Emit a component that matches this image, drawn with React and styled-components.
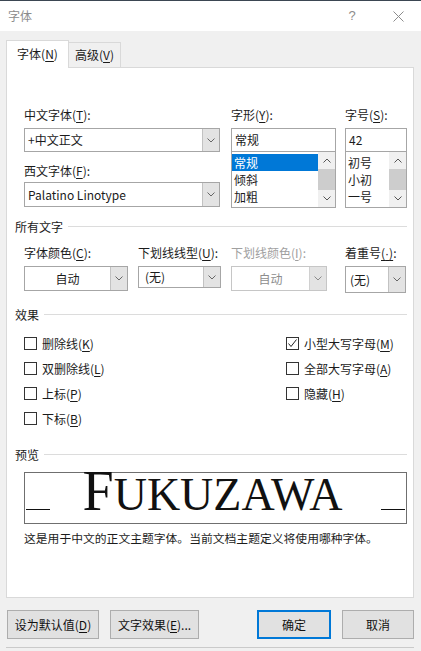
import React from 'react'
import styled, {createGlobalStyle} from 'styled-components'

const GlobalStyle = createGlobalStyle`
  html, body {
    margin: 0;
    padding: 0;
    background: #f0f0f0;
  }
  body {
    font-family: "Noto Sans CJK SC", "Microsoft YaHei", sans-serif;
    font-size: 12px;
    color: #1b1b1b;
  }
  * {
    box-sizing: border-box;
  }
  u {
    text-underline-offset: 2px;
  }
`

const Window = styled.div`
  width: 421px;
  height: 651px;
  display: flex;
  flex-direction: column;
  border-top: 1px solid #3b4652;
  background: #f0f0f0;
  overflow: hidden;
`

const TitleBar = styled.div`
  height: 30px;
  flex-shrink: 0;
  background: #fff;
  display: flex;
  align-items: center;
  padding-left: 8px;
  color: #8c8c8c;
  line-height: 16px;
`

const TitleText = styled.div`
  flex: 1;
`

const TitleButton = styled.div`
  width: 46px;
  height: 30px;
  display: flex;
  align-items: center;
  justify-content: center;
  color: #8c8c8c;
  font-family: "Liberation Sans", sans-serif;
  font-size: 13px;
`

const Body = styled.div`
  flex: 1;
  display: flex;
  flex-direction: column;
  padding: 9px 7px 0 6px;
`

const TabRow = styled.div`
  height: 27px;
  display: flex;
  align-items: flex-end;
`

const Tab = styled.div`
  position: relative;
  z-index: ${(p) => (p.$active ? 1 : 0)};
  width: ${(p) => p.$w}px;
  height: ${(p) => (p.$active ? 28 : 25)}px;
  margin-bottom: ${(p) => (p.$active ? -1 : 0)}px;
  background: ${(p) => (p.$active ? '#fff' : '#f0f0f0')};
  border: 1px solid #d9d9d9;
  border-bottom: none;
  border-left: ${(p) => (p.$first ? '1px solid #d9d9d9' : 'none')};
  display: flex;
  align-items: center;
  justify-content: center;
  line-height: 16px;
  padding-bottom: ${(p) => (p.$active ? 1 : 0)}px;
`

const Panel = styled.div`
  height: 531px;
  background: #fff;
  border: 1px solid #d9d9d9;
  padding: 39px 6px 0 8px;
  display: flex;
  flex-direction: column;
`

const Indent = styled.div`
  margin-left: 9px;
  display: grid;
  grid-template-columns: ${(p) => p.$cols};
  align-items: start;
`

const Column = styled.div`
  display: flex;
  flex-direction: column;
`

const Label = styled.div`
  line-height: 16px;
  height: 16px;
  white-space: nowrap;
  color: ${(p) => (p.$disabled ? '#a0a0a0' : '#1b1b1b')};
  margin-top: ${(p) => p.$mt || 0}px;
  margin-bottom: ${(p) => p.$mb || 0}px;
`

const Dot = styled.span`
  font-family: "Liberation Sans", sans-serif;
`

const Combo = styled.div`
  width: ${(p) => p.$w}px;
  height: ${(p) => p.$h}px;
  border: 1px solid ${(p) => (p.$disabled ? '#c6c6c6' : '#a6a6a6')};
  background: #fff;
  display: flex;
  align-items: stretch;
`

const ComboValue = styled.div`
  flex: 1;
  display: flex;
  align-items: center;
  justify-content: ${(p) => (p.$center ? 'center' : 'flex-start')};
  padding-left: ${(p) => (p.$center ? 0 : p.$pl || 3)}px;
  color: ${(p) => (p.$disabled ? '#8d8d8d' : '#1b1b1b')};
  white-space: nowrap;
  line-height: 16px;
`

const ComboArrow = styled.div`
  width: 17px;
  background: #e3e3e3;
  border-left: 1px solid ${(p) => (p.$disabled ? '#d0d0d0' : '#c2c2c2')};
  display: flex;
  align-items: center;
  justify-content: center;
`

const TextBox = styled.div`
  width: ${(p) => p.$w}px;
  height: 24px;
  border: 1px solid #a6a6a6;
  display: flex;
  align-items: center;
  padding-left: 3px;
  line-height: 16px;
`

const ListBox = styled.div`
  width: ${(p) => p.$w}px;
  height: 56px;
  border: 1px solid #a6a6a6;
  border-top: none;
  display: flex;
`

const ListItems = styled.div`
  flex: 1;
  padding-top: 2px;
  display: flex;
  flex-direction: column;
`

const ListItem = styled.div`
  height: 17px;
  line-height: 17px;
  padding-left: 2px;
  background: ${(p) => (p.$selected ? '#0078d7' : 'transparent')};
  color: ${(p) => (p.$selected ? '#fff' : '#1b1b1b')};
`

const ScrollBar = styled.div`
  width: 17px;
  display: flex;
  flex-direction: column;
  background: #f0f0f0;
`

const ScrollArrow = styled.div`
  height: 17px;
  display: flex;
  align-items: center;
  justify-content: center;
`

const ScrollThumb = styled.div`
  flex: 1;
  background: #cdcdcd;
`

const SectionHeader = styled.div`
  display: flex;
  align-items: center;
  height: 16px;
  line-height: 16px;
  margin-top: ${(p) => p.$mt}px;
`

const SectionLine = styled.div`
  flex: 1;
  height: 1px;
  margin-left: 5px;
  margin-top: -1px;
  background: #dcdcdc;
`

const CheckGrid = styled.div`
  margin-left: 9px;
  margin-top: 8px;
  display: grid;
  grid-template-columns: 262px 1fr;
  grid-auto-rows: 25px;
`

const CheckRow = styled.div`
  display: flex;
  align-items: center;
  line-height: 16px;
  white-space: nowrap;
`

const CheckBox = styled.div`
  width: 13px;
  height: 13px;
  border: 1px solid #333;
  background: #fff;
  margin-right: 5px;
  display: flex;
  align-items: center;
  justify-content: center;
`

const Preview = styled.div`
  margin-left: 9px;
  margin-top: 9px;
  height: 52px;
  border: 1px solid #6f6f6f;
  display: flex;
  align-items: baseline;
  justify-content: space-between;
  padding: 0 1px 0 1px;
`

const PreviewRule = styled.div`
  width: 24px;
  height: 1px;
  background: #111;
`

const PreviewText = styled.div`
  font-family: "Liberation Serif", "DejaVu Serif", serif;
  font-size: 56px;
  line-height: 36px;
  color: #111;
  margin-right: 6px;
  white-space: nowrap;
`

const SmallCaps = styled.span`
  font-size: 46px;
`

const Description = styled.div`
  margin-left: 9px;
  margin-top: 6px;
  line-height: 16px;
  white-space: nowrap;
  font-size: 11.8px;
`

const ButtonRow = styled.div`
  margin-top: 12px;
  padding-left: 1px;
  display: flex;
  justify-content: space-between;
`

const ButtonGroup = styled.div`
  display: flex;
  gap: 11px;
`

const Button = styled.div`
  width: ${(p) => p.$w}px;
  height: 29px;
  background: #e1e1e1;
  border: ${(p) => (p.$default ? '2px solid #0078d7' : '1px solid #adadad')};
  display: flex;
  align-items: center;
  justify-content: center;
  line-height: 16px;
  white-space: nowrap;
  color: #111;
`

const BottomEdge = styled.div`
  margin-top: auto;
  margin-bottom: 3px;
  height: 1px;
  background: #cacaca;
`

function Chevron({up, color = '#666'}) {
  return (
    <svg width="8" height="5" viewBox="0 0 8 5">
      <polyline
        points={up ? '0.5,4.5 4,1 7.5,4.5' : '0.5,0.5 4,4 7.5,0.5'}
        fill="none"
        stroke={color}
        strokeWidth="1"
      />
    </svg>
  )
}

function Dropdown({w, h = 25, value, center, pl, disabled}) {
  return (
    <Combo $w={w} $h={h} $disabled={disabled}>
      <ComboValue $center={center} $pl={pl} $disabled={disabled}>
        {value}
      </ComboValue>
      <ComboArrow $disabled={disabled}>
        <Chevron color={disabled ? '#8a8a8a' : '#666'} />
      </ComboArrow>
    </Combo>
  )
}

function List({w, items}) {
  return (
    <ListBox $w={w}>
      <ListItems>
        {items.map((item) => (
          <ListItem key={item.text} $selected={item.selected}>
            {item.text}
          </ListItem>
        ))}
      </ListItems>
      <ScrollBar>
        <ScrollArrow>
          <Chevron up color="#555" />
        </ScrollArrow>
        <ScrollThumb />
        <ScrollArrow>
          <Chevron color="#555" />
        </ScrollArrow>
      </ScrollBar>
    </ListBox>
  )
}

function Check({checked, children}) {
  return (
    <CheckRow>
      <CheckBox>
        {checked && (
          <svg width="11" height="11" viewBox="0 0 11 11">
            <polyline
              points="1.5,5.5 4,8.5 9.5,1.5"
              fill="none"
              stroke="#222"
              strokeWidth="1"
            />
          </svg>
        )}
      </CheckBox>
      {children}
    </CheckRow>
  )
}

export default function App() {
  return (
    <>
      <GlobalStyle />
      <Window>
        <TitleBar>
          <TitleText>字体</TitleText>
          <TitleButton>?</TitleButton>
          <TitleButton>
            <svg width="11" height="11" viewBox="0 0 11 11">
              <path d="M0.5 0.5 L10.5 10.5 M10.5 0.5 L0.5 10.5" stroke="#8c8c8c" strokeWidth="1" />
            </svg>
          </TitleButton>
        </TitleBar>

        <Body>
          <TabRow>
            <Tab $active $first $w={63}>
              字体(<u>N</u>)
            </Tab>
            <Tab $w={52}>
              高级(<u>V</u>)
            </Tab>
          </TabRow>

          <Panel>
            <Indent $cols="207px 114px 62px">
              <Column>
                <Label $mb={5}>
                  中文字体(<u>T</u>):
                </Label>
                <Dropdown w={196} h={24} value="+中文正文" />
                <Label $mt={11} $mb={3}>
                  西文字体(<u>F</u>):
                </Label>
                <Dropdown w={196} h={25} value="Palatino Linotype" />
              </Column>
              <Column>
                <Label $mb={5}>
                  字形(<u>Y</u>):
                </Label>
                <TextBox $w={105}>常规</TextBox>
                <List
                  w={105}
                  items={[
                    {text: '常规', selected: true},
                    {text: '倾斜'},
                    {text: '加粗'},
                  ]}
                />
              </Column>
              <Column>
                <Label $mb={5}>
                  字号(<u>S</u>):
                </Label>
                <TextBox $w={62}>42</TextBox>
                <List
                  w={62}
                  items={[{text: '初号'}, {text: '小初'}, {text: '一号'}]}
                />
              </Column>
            </Indent>

            <SectionHeader $mt={11}>
              所有文字
              <SectionLine />
            </SectionHeader>

            <Indent $cols="114px 93px 114px 62px">
              <Column>
                <Label $mt={10} $mb={5}>
                  字体颜色(<u>C</u>):
                </Label>
                <Dropdown w={104} value="自动" center />
              </Column>
              <Column>
                <Label $mt={10} $mb={5}>
                  下划线线型(<u>U</u>):
                </Label>
                <Dropdown w={83} h={22} value="(无)" pl={6} />
              </Column>
              <Column>
                <Label $mt={10} $mb={5} $disabled>
                  下划线颜色(<u>I</u>):
                </Label>
                <Dropdown w={96} value="自动" center disabled />
              </Column>
              <Column>
                <Label $mt={10} $mb={5}>
                  着重号<u>(<Dot>·</Dot>)</u>:
                </Label>
                <Dropdown w={61} h={27} value="(无)" pl={4} />
              </Column>
            </Indent>

            <SectionHeader $mt={14}>
              效果
              <SectionLine />
            </SectionHeader>

            <CheckGrid>
              <Check>
                删除线(<u>K</u>)
              </Check>
              <Check checked>
                小型大写字母(<u>M</u>)
              </Check>
              <Check>
                双删除线(<u>L</u>)
              </Check>
              <Check>
                全部大写字母(<u>A</u>)
              </Check>
              <Check>
                上标(<u>P</u>)
              </Check>
              <Check>
                隐藏(<u>H</u>)
              </Check>
              <Check>
                下标(<u>B</u>)
              </Check>
            </CheckGrid>

            <SectionHeader $mt={16}>
              预览
              <SectionLine />
            </SectionHeader>

            <Preview>
              <PreviewRule />
              <PreviewText>
                F<SmallCaps>UKUZAWA</SmallCaps>
              </PreviewText>
              <PreviewRule />
            </Preview>

            <Description>
              这是用于中文的正文主题字体。当前文档主题定义将使用哪种字体。
            </Description>
          </Panel>

          <ButtonRow>
            <ButtonGroup>
              <Button $w={92}>
                设为默认值(<u>D</u>)
              </Button>
              <Button $w={89}>
                文字效果(<u>E</u>)...
              </Button>
            </ButtonGroup>
            <ButtonGroup>
              <Button $w={74} $default>
                确定
              </Button>
              <Button $w={72}>取消</Button>
            </ButtonGroup>
          </ButtonRow>

          <BottomEdge />
        </Body>
      </Window>
    </>
  )
}
